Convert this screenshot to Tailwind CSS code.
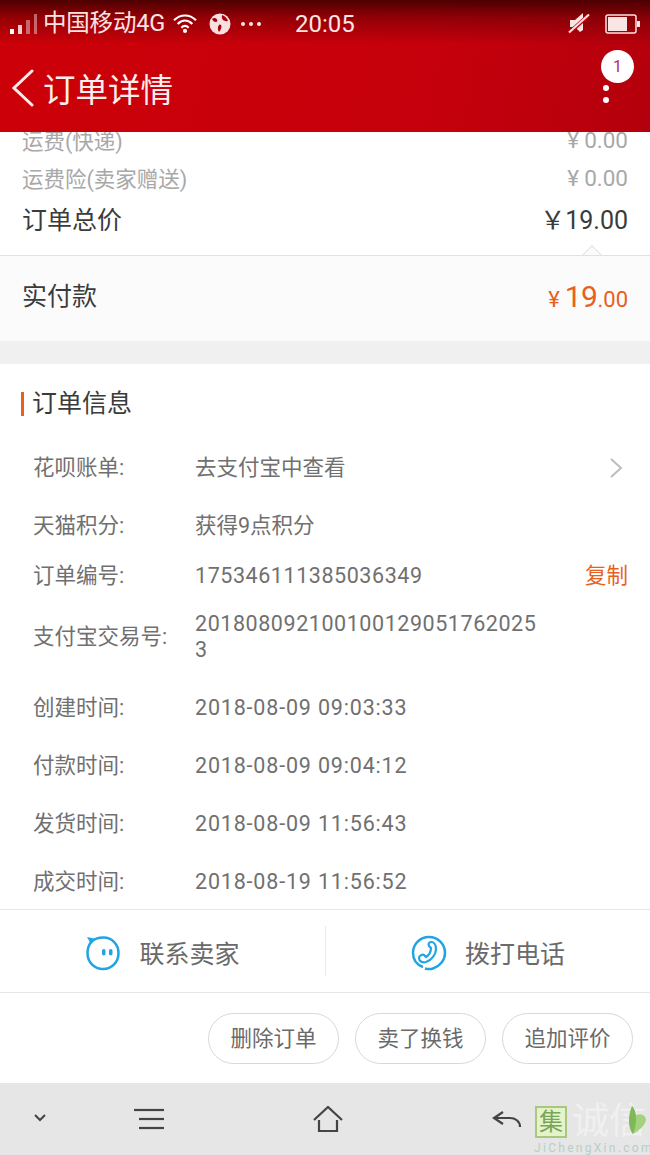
<!DOCTYPE html>
<html lang="zh">
<head>
<meta charset="utf-8">
<script src="https://cdn.jsdelivr.net/npm/@tailwindcss/browser@4"></script>
</head>
<body class="m-0 bg-white">
<div class="relative w-[650px] h-[1155px] overflow-hidden flex flex-col bg-white text-[#666] font-['Roboto','Noto_Sans_CJK_SC',sans-serif]">

  <!-- header -->
  <header class="h-[132px] shrink-0 flex flex-col text-white bg-[linear-gradient(180deg,rgba(70,0,0,.95)_0px,rgba(70,0,0,.4)_18px,rgba(70,0,0,0)_44px),linear-gradient(100deg,#cc0008_0%,#c6000c_65%,#b4000c_100%)]">
    <div class="h-[44px] flex items-center pl-[10px] pr-[10px] pt-[4px]">
      <svg width="28" height="24" viewBox="0 0 28 24" class="shrink-0">
        <rect x="0" y="17" width="4" height="5" fill="#fff"/>
        <rect x="8" y="13" width="4" height="9" fill="#fff" fill-opacity=".8"/>
        <rect x="16" y="8" width="4" height="14" fill="#fff" fill-opacity=".4"/>
        <rect x="24" y="2" width="3" height="20" fill="#fff" fill-opacity=".4"/>
      </svg>
      <span class="ml-[5px] text-[23.500px] leading-none tracking-[-0.2px] text-[#fbe4e4] whitespace-nowrap">中国移动4G</span>
      <svg width="26" height="22" viewBox="0 0 28 24" class="ml-[7px] shrink-0" fill="none" stroke="#fff" stroke-width="2.400">
        <path d="M2 8C9 1 19 1 26 8"/><path d="M6 12C11 7 17 7 22 12"/><path d="M10 16C12.500 13.500 15.500 13.500 18 16"/><circle cx="14" cy="19.500" r="2.200" fill="#fff" stroke="none"/>
      </svg>
      <svg width="22" height="22" viewBox="0 0 22 22" class="ml-[11px] shrink-0">
        <circle cx="11" cy="11" r="10.500" fill="#f9e0e0"/>
        <path d="M3 6C5 4.500 7 5 8 6.500C9 8 8 9 7 9C5 9 4 8 3 6ZM13 2C16 3 18.500 5.500 19 8C17 8.500 15 8 14 7C13 6 12.500 4 13 2ZM10 12C11.500 11 12.500 12 12.500 14C12 16 11 18 10 19C8.500 17 8.500 13.500 10 12Z" fill="#a8000a"/>
      </svg>
      <span class="ml-[10px] flex gap-[4px] shrink-0"><i class="block w-[4px] h-[4px] rounded-full bg-[#fbe4e4]"></i><i class="block w-[4px] h-[4px] rounded-full bg-[#fbe4e4]"></i><i class="block w-[4px] h-[4px] rounded-full bg-[#fbe4e4]"></i></span>
      <span class="ml-[34px] text-[24px] leading-none text-[#fbe4e4]">20:05</span>
      <svg width="22" height="24" viewBox="0 0 22 24" class="ml-auto shrink-0">
        <path d="M2 8H7L15 1V18L12 20L7 15H2Z" fill="#fbe4e4"/>
        <path d="M1 21L21 3" stroke="#c4000c" stroke-width="4"/>
        <path d="M1 20.500L21 2.500" stroke="#fbe4e4" stroke-width="2"/>
      </svg>
      <svg width="35" height="20" viewBox="0 0 35 20" class="ml-[15px] shrink-0">
        <rect x="1" y="1" width="30" height="18" rx="2" fill="none" stroke="#fbe4e4" stroke-width="1.500"/>
        <rect x="3" y="3" width="19" height="14" fill="#fbe4e4"/>
        <rect x="32" y="7" width="3" height="6" fill="#fbe4e4"/>
      </svg>
    </div>
    <div class="relative flex-1 flex items-center pl-[12px]">
      <svg width="22" height="38" viewBox="0 0 22 38" fill="none" stroke="#fbeaea" stroke-width="3" stroke-linecap="round" class="shrink-0 mt-[-1px]">
        <path d="M20 2L2 19L20 36"/>
      </svg>
      <span class="ml-[9px] text-[32.500px] leading-none text-[#fdeeee] mt-[6px]">订单详情</span>
      <div class="absolute left-[601px] top-[6px] w-[33px] h-[33px] rounded-full bg-white text-[#b0306a] text-[16px] leading-[33px] text-center">1</div>
      <div class="absolute left-[603px] top-[41px] flex flex-col gap-[6px]"><i class="block w-[6px] h-[6px] rounded-full bg-white"></i><i class="block w-[6px] h-[6px] rounded-full bg-white"></i></div>
    </div>
  </header>

  <!-- price summary -->
  <section class="relative h-[123px] shrink-0 px-[22px] overflow-hidden">
    <div class="flex justify-between text-[21.500px] leading-[38px] h-[38px] text-[#a8a8a8] mt-[-9px]"><span>运费(快递)</span><span class="text-[22.500px] leading-[34px] flex"><span class="mr-[5px]">¥</span>0.00</span></div>
    <div class="flex justify-between text-[21.500px] leading-[38px] h-[38px] text-[#a8a8a8]"><span>运费险(卖家赠送)</span><span class="text-[22.500px] leading-[34px] flex"><span class="mr-[5px]">¥</span>0.00</span></div>
    <div class="flex justify-between text-[25px] leading-[46px] h-[46px] text-[#3b3b3b] mt-[-1px]"><span>订单总价</span><span>￥19.00</span></div>
    <div class="absolute right-[51px] bottom-[-7px] w-[14px] h-[14px] rotate-45 border-l border-t border-[#e2e2e2] bg-[#fbfbfb]"></div>
  </section>
  <section class="h-[86px] shrink-0 bg-[#fbfbfb] border-t border-[#e2e2e2] px-[22px] pb-[4px] flex items-center justify-between">
    <span class="text-[25px] text-[#3b3b3b]">实付款</span>
    <span class="text-[#e8611c] flex items-baseline text-[22px]"><span class="mr-[5px]">¥</span><span class="text-[30px] tracking-[-0.5px]">19</span><span>.00</span></span>
  </section>
  <div class="h-[23px] shrink-0 bg-[#f0f0f0]"></div>

  <!-- order info -->
  <section class="flex-1 min-h-0">
    <div class="h-[78px] flex items-center pl-[21px] pt-[2px]">
      <i class="block w-[3px] h-[24px] bg-[#e8611c]"></i>
      <span class="ml-[8px] text-[25px] text-[#3b3b3b]">订单信息</span>
    </div>
    <div class="pl-[33px] pr-[22px] text-[21.500px] text-[#707070]">
      <div class="flex items-center h-[52px]"><span class="w-[162px]">花呗账单:</span><span class="flex-1">去支付宝中查看</span>
        <svg width="14" height="22" viewBox="0 0 14 22" fill="none" stroke="#bdbdbd" stroke-width="2" class="mr-[5px]"><path d="M2 2L12 11L2 20"/></svg></div>
      <div class="flex items-center h-[58px] mt-[3px]"><span class="w-[162px]">天猫积分:</span><span>获得9点积分</span></div>
      <div class="flex items-center h-[42px]"><span class="w-[162px]">订单编号:</span><span class="flex-1 tracking-[0.56px]">175346111385036349</span><span class="text-[#e8611c]">复制</span></div>
      <div class="flex items-center h-[80px]"><span class="w-[162px]">支付宝交易号:</span><span class="w-[345px] break-all leading-[26px] tracking-[0.56px]">2018080921001001290517620253</span></div>
      <div class="flex items-center h-[58px] mt-[2px]"><span class="w-[162px]">创建时间:</span><span class="tracking-[0.82px]">2018-08-09 09:03:33</span></div>
      <div class="flex items-center h-[58px]"><span class="w-[162px]">付款时间:</span><span class="tracking-[0.82px]">2018-08-09 09:04:12</span></div>
      <div class="flex items-center h-[58px]"><span class="w-[162px]">发货时间:</span><span class="tracking-[0.82px]">2018-08-09 11:56:43</span></div>
      <div class="flex items-center h-[58px]"><span class="w-[162px]">成交时间:</span><span class="tracking-[0.82px]">2018-08-19 11:56:52</span></div>
    </div>
  </section>

  <!-- contact -->
  <section class="h-[84px] shrink-0 border-t border-b border-[#e6e6e6] flex items-center">
    <div class="w-[325px] flex items-center justify-center gap-[18px] pt-[8px]">
      <svg width="36" height="36" viewBox="0 0 36 36" fill="none" class="mt-[-4px]">
        <path d="M6 7C9 4 13 2.500 18.500 2.500C27 2.500 33.500 9.500 33.500 18C33.500 27 27 34 18 34C9 34 2.500 27 2.500 18C2.500 14 3.500 10.500 6 7Z" stroke="#21a4e4" stroke-width="2.500"/>
        <path d="M2 2L11 4L6 9Z" fill="#21a4e4"/>
        <rect x="17" y="14" width="3.500" height="6.500" rx="1.700" fill="#21a4e4"/><rect x="24" y="14" width="3.500" height="6.500" rx="1.700" fill="#21a4e4"/>
      </svg>
      <span class="text-[25px] text-[#6a6a6a]">联系卖家</span>
    </div>
    <i class="block w-px h-[50px] bg-[#ececec]"></i>
    <div class="flex-1 flex items-center justify-center gap-[18px] pt-[8px]">
      <svg width="36" height="36" viewBox="0 0 36 36" fill="none" stroke="#21a4e4" stroke-width="2.500" class="mt-[-4px]">
        <path d="M12 32C5 29.500 2 24 2 18C2 9 9 2 18 2C27 2 34 9 34 18C34 25 29 31 22 33.500C19 34.500 16 34 14 33.500"/>
        <path d="M20 7C23 7 25 10 25 14C25 19 21 25 15 27C11 28 8 26 8 23C8 21 11 19 13 20L15 22C18 20 20 16 20 13L18 11C17 9 18 7 20 7Z" stroke-width="2.200"/>
      </svg>
      <span class="text-[25px] text-[#6a6a6a]">拨打电话</span>
    </div>
  </section>

  <!-- actions -->
  <section class="h-[90px] shrink-0 flex items-center justify-end gap-[16px] pr-[17px] pt-[1px]">
    <button class="w-[131px] h-[51px] rounded-full border border-[#d8d8d8] pt-[2px] text-[21.500px] text-[#6a6a6a]">删除订单</button>
    <button class="w-[131px] h-[51px] rounded-full border border-[#d8d8d8] pt-[2px] text-[21.500px] text-[#6a6a6a]">卖了换钱</button>
    <button class="w-[131px] h-[51px] rounded-full border border-[#d8d8d8] pt-[2px] text-[21.500px] text-[#6a6a6a]">追加评价</button>
  </section>

  <!-- system nav -->
  <nav class="relative h-[72px] shrink-0 bg-[#e6e6e6]">
    <div class="flex items-start h-full pt-[25px] text-[#444]">
      <svg width="14" height="10" viewBox="0 0 14 10" fill="none" stroke="#444" stroke-width="2" class="ml-[33px] mt-[5px]"><path d="M2 2L7 7L12 2"/></svg>
      <svg width="30" height="22" viewBox="0 0 30 22" fill="none" stroke="#444" stroke-width="2.200" class="ml-[87px]"><path d="M0 2H30"/><path d="M5 11H30"/><path d="M5 20H30"/></svg>
      <svg width="30" height="27" viewBox="0 0 30 27" fill="none" stroke="#444" stroke-width="2.200" class="ml-[149px] mt-[-2px]"><path d="M1 14L15 1L29 14"/><path d="M6 14V25H24V14"/></svg>
      <svg width="30" height="17" viewBox="0 0 30 17" fill="none" stroke="#444" stroke-width="2.200" class="ml-[149px] mt-[3px]"><path d="M11 1L2 7L11 13"/><path d="M2 7H18C23 7 28 10 28 16"/></svg>
    </div>
    <!-- watermark -->
    <div class="absolute left-[534px] top-[23px] w-[116px] h-[49px]">
      <div class="absolute left-[1px] top-0 w-[32px] h-[32px] border-[2px] border-[#a9c77f] bg-[#e4f3ca] text-[#78a657] text-[24px] leading-[28px] text-center">集</div>
      <div class="absolute left-[38px] top-[-3px] text-[37px] leading-[38px] text-[#f0f0f0] whitespace-nowrap">诚信</div>
      <svg width="20" height="30" viewBox="0 0 20 30" class="absolute left-[93px] top-[-1px]"><path d="M5 1C8 4 8 8 9 10C13 8 19 10 19 15C18 21 11 26 6 29C2 24 0 14 5 1Z" fill="#a4d27c"/><path d="M5 1C8 4 9 10 9 14C9 19 8 24 6 29C2 24 0 14 5 1Z" fill="#7fb85a"/></svg>
      <div class="absolute left-[0px] top-[36px] text-[12px] leading-[12px] tracking-[2.300px] text-[#b5cfc8] whitespace-nowrap">JiChengXin.com</div>
    </div>
  </nav>
</div>
</body>
</html>
